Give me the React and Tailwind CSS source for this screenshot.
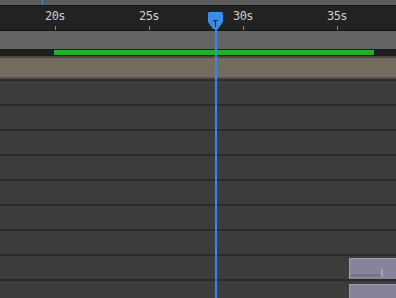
import React from "react";

const labels = ["20s", "25s", "30s", "35s"];

function Row({ children }) {
  return (
    <div className="relative h-[25px] shrink-0 border-b-2 border-[#292929] bg-[#3c3c3c]">
      {children}
    </div>
  );
}

export default function App() {
  return (
    <div
      className="relative w-[396px] h-[298px] overflow-hidden bg-[#3c3c3c] flex flex-col"
      style={{ fontFamily: '"DejaVu Sans Mono", "Liberation Mono", monospace' }}
    >
      {/* top strip */}
      <div className="relative h-[5px] shrink-0 bg-[#5c5c5c]">
        <div className="absolute left-[42px] top-0 h-[5px] w-[1px] bg-[#3a8ee6]" />
      </div>
      {/* ruler */}
      <div className="h-[26px] shrink-0 bg-[#222222] border-t border-b border-[#141414] flex pl-[8px]">
        {labels.map((l) => (
          <div key={l} className="w-[94px] flex flex-col items-center">
            <span className="mt-[2px] h-[16px] text-[12px] leading-[16px] tracking-[-0.6px] text-[#cfcfcf]">
              {l}
            </span>
            <div className="mt-[2px] h-[6px] w-[1px] bg-[#8a8a8a]" />
          </div>
        ))}
      </div>
      {/* gray band */}
      <div className="h-[18px] shrink-0 bg-[#646464]" />
      {/* work area bar */}
      <div className="h-[7px] shrink-0 bg-[#1e1e1e] flex items-center">
        <div className="ml-[54px] w-[320px] h-[5px] bg-[#1fb22a]" />
      </div>
      {/* tan layer band */}
      <div className="h-[2px] shrink-0 bg-[#4d4a45]" />
      <div className="h-[19px] shrink-0 bg-[#736b5d]" />
      <div className="h-[2px] shrink-0 bg-[#505050]" />
      <div className="h-[2px] shrink-0 bg-[#2c2c2c]" />
      {/* rows */}
      <div className="flex flex-col">
        <Row />
        <Row />
        <Row />
        <Row />
        <Row />
        <Row />
        <Row />
        <Row>
          <div className="absolute left-[349px] top-[2px] h-[21px] w-[47px] bg-[#85849b] border-l border-t border-[#a09fb4]">
            <svg className="absolute left-0 bottom-[1px]" width="40" height="10" viewBox="0 0 40 10">
              <path
                d="M1 8 Q3 5 5 8 Q7 5 9 8 Q11 5 13 8 Q15 5 17 8 Q19 5 21 8 Q23 5 25 8 Q27 5 29 8 L31 8"
                fill="none"
                stroke="#5f5e70"
                strokeWidth="1"
              />
              <line x1="32" y1="1" x2="32" y2="9" stroke="#c0bfd0" strokeWidth="1" />
            </svg>
          </div>
        </Row>
        <Row>
          <div className="absolute left-[349px] top-[3px] h-[21px] w-[47px] bg-[#85849b] border-l border-t border-[#a09fb4]" />
        </Row>
      </div>
      {/* playhead */}
      <div className="absolute left-[215px] top-[20px] bottom-0 w-[2px] bg-[#2f8ae8]" />
      <svg className="absolute left-[208px] top-[12px]" width="15" height="18" viewBox="0 0 15 18">
        <path
          d="M1.5 0 H13.5 A1.5 1.5 0 0 1 15 1.5 V10 L10 17 H5 L0 10 V1.5 A1.5 1.5 0 0 1 1.5 0 Z"
          fill="#3a8ee6"
        />
        <path d="M5 8.5 H10 M7.5 8.5 V15" stroke="#1b2a3a" strokeWidth="1.2" fill="none" />
      </svg>
    </div>
  );
}
